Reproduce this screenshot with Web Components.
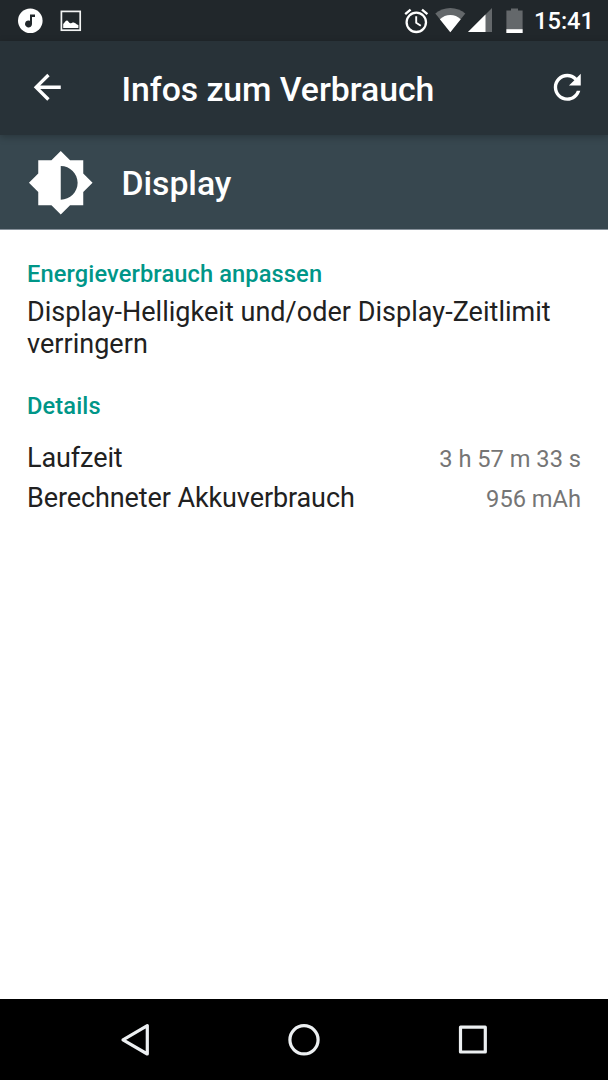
<!DOCTYPE html>
<html lang="de">
<head>
<meta charset="utf-8">
<title>Infos zum Verbrauch</title>
<style>
    html, body {
        margin: 0;
        height: 100%;
    }
    body {
        font-family: Roboto, sans-serif;
        background: #fff;
        overflow: hidden;
    }
</style>
</head>
<body>
<battery-screen>
    <status-bar slot="status" time="15:41"></status-bar>
    <tool-bar slot="toolbar">Infos zum Verbrauch</tool-bar>
    <entry-header slot="header">Display</entry-header>
    <info-section heading="Energieverbrauch anpassen">
        <info-summary>Display-Helligkeit und/oder Display-Zeitlimit verringern</info-summary>
    </info-section>
    <info-section heading="Details" spaced>
        <detail-row value="3 h 57 m 33 s">Laufzeit</detail-row>
        <detail-row value="956 mAh">Berechneter Akkuverbrauch</detail-row>
    </info-section>
    <nav-bar slot="nav"></nav-bar>
</battery-screen>

<script>
class BaseElement extends HTMLElement {
    constructor() {
        super();
        this._shadowRoot = this.attachShadow({ mode: 'open' })
        this._shadowRoot.innerHTML = this.template()
    }
}

class BatteryScreen extends BaseElement {
    template() {
        return `
            <style>
                :host {
                    display: grid;
                    grid-template-rows: 41px 94px 95px 1fr 81px;
                    height: 100vh;
                }
                main {
                    padding: 28px 27px 0;
                }
            </style>
            <slot name="status"></slot>
            <slot name="toolbar"></slot>
            <slot name="header"></slot>
            <main><slot></slot></main>
            <slot name="nav"></slot>
        `
    }
}

class StatusBar extends BaseElement {
    template() {
        return `
            <style>
                :host {
                    display: flex;
                    align-items: center;
                    box-sizing: border-box;
                    padding: 0 14px 0 17px;
                    background: #21272b;
                    color: #fff;
                }
                svg {
                    flex: none;
                    display: block;
                }
                .image { margin-left: 16px; }
                .alarm { margin-left: auto; }
                .wifi { margin-left: 6px; }
                .signal { margin-left: 2px; }
                .battery { margin-left: 13.5px; }
                .time {
                    margin-left: 11.5px;
                    padding-top: 1px;
                    font-size: 23.65px;
                    font-weight: 500;
                    line-height: 28px;
                }
            </style>
            <svg class="music" width="27" height="26" viewBox="0 0 27 26">
                <circle cx="13.3" cy="12.8" r="12.3" fill="#fff"/>
                <path d="M13 6.4h5v2.600h-3v7a3.500 3.500 0 1 1-2-3.200z" fill="#21272b"/>
            </svg>
            <svg class="image" width="22" height="22" viewBox="0 0 22 22">
                <rect x="1.4" y="1.4" width="18.8" height="18.8" fill="none" stroke="#f2f3f3" stroke-width="1.7"/>
                <path d="M3.2 18v-4c1.400-1 2-3 3.600-3.400 1.200-.2 1.800 1.800 2.800 2.400 1.200.600 2.600-.800 4.200-.600 1.400.200 2.400 1.800 4.600 2.600v3z" fill="#fff"/>
            </svg>
            <svg class="alarm" width="25" height="26" viewBox="0 0 25 26">
                <circle cx="12.3" cy="14.3" r="9.7" fill="none" stroke="#fff" stroke-width="2.3"/>
                <path d="M12.2 8.2v6.5l4.6 3" fill="none" stroke="#fff" stroke-width="1.9"/>
                <path d="M1.2 6.2l5.4-4.5M23.4 6.2L18 1.7" stroke="#fff" stroke-width="2.4"/>
            </svg>
            <svg class="wifi" width="31" height="25" viewBox="0 0 31 25">
                <path d="M15.3 24.2L.3 5.6C4.2 2.2 9.5 0 15.3 0s11.1 2.2 15 5.6z" fill="#64686b"/>
                <path d="M15.3 24.2L4.9 11.2c2.9-2.5 6.5-4.1 10.4-4.1s7.5 1.6 10.4 4.1z" fill="#fff"/>
            </svg>
            <svg class="signal" width="24" height="25" viewBox="0 0 24 25">
                <path d="M0 24L24 0v24z" fill="#64686b"/>
                <path d="M0 24L17.5 6.5v17.5z" fill="#fff"/>
            </svg>
            <svg class="battery" width="17" height="26" viewBox="0 0 17 26">
                <path d="M5 .4h7v2h4.600v22.600H.4V2.400H5z" fill="#64686b"/>
                <path d="M.4 21.200h16.200v3.800H.4z" fill="#fff"/>
            </svg>
            <span class="time"></span>
        `
    }

    connectedCallback() {
        this._shadowRoot.querySelector('.time').textContent = this.getAttribute('time')
    }
}

class ToolBar extends BaseElement {
    template() {
        return `
            <style>
                :host {
                    display: flex;
                    align-items: center;
                    box-sizing: border-box;
                    padding: 0 20.5px 0 26.5px;
                    background: #283238;
                    color: #fff;
                    box-shadow: 0 2px 7px rgba(0, 0, 0, .25);
                    z-index: 1;
                }
                svg {
                    flex: none;
                    fill: currentColor;
                    margin-bottom: 1px;
                }
                h1 {
                    flex: 1;
                    margin: 0 0 0 54.5px;
                    padding-top: 3px;
                    font-size: 33.8px;
                    font-weight: 500;
                    line-height: 40px;
                    letter-spacing: -.06px;
                    white-space: nowrap;
                }
            </style>
            <svg width="40.5" height="40.5" viewBox="0 0 24 24">
                <path d="M20 11H7.83l5.59-5.59L12 4l-8 8 8 8 1.41-1.41L7.83 13H20v-2z"/>
            </svg>
            <h1><slot></slot></h1>
            <svg width="40.5" height="40.5" viewBox="0 0 24 24">
                <path d="M17.65 6.35C16.2 4.9 14.21 4 12 4c-4.42 0-7.99 3.58-7.99 8s3.57 8 7.99 8c3.73 0 6.84-2.55 7.73-6h-2.08c-.82 2.33-3.04 4-5.65 4-3.31 0-6-2.69-6-6s2.69-6 6-6c1.66 0 3.14.69 4.22 1.78L13 11h7V4l-2.35 2.35z"/>
            </svg>
        `
    }
}

class EntryHeader extends BaseElement {
    template() {
        return `
            <style>
                :host {
                    display: flex;
                    align-items: center;
                    box-sizing: border-box;
                    padding: 0 27px;
                    background: #37474f;
                    border-bottom: 1px solid #87919a;
                    color: #fff;
                }
                svg {
                    flex: none;
                    fill: currentColor;
                    margin-top: 1px;
                }
                h2 {
                    margin: 0 0 0 27px;
                    padding-top: 3px;
                    font-size: 33.8px;
                    font-weight: 500;
                    line-height: 40px;
                    letter-spacing: -.06px;
                }
            </style>
            <svg width="67.5" height="67.5" viewBox="0 0 24 24">
                <path d="M20 15.31L23.31 12 20 8.69V4h-4.69L12 .69 8.69 4H4v4.69L.69 12 4 15.31V20h4.69L12 23.31 15.31 20H20v-4.69zM12 18V6c3.31 0 6 2.69 6 6s-2.69 6-6 6z"/>
            </svg>
            <h2><slot></slot></h2>
        `
    }
}

class InfoSection extends BaseElement {
    template() {
        return `
            <style>
                :host {
                    display: block;
                }
                :host([spaced]) {
                    margin-top: 30px;
                }
                h3 {
                    margin: 0;
                    padding-bottom: 6px;
                    color: #009688;
                    font-size: 23.65px;
                    font-weight: 500;
                    line-height: 32px;
                    letter-spacing: .11px;
                }
                :host([spaced]) h3 {
                    padding-bottom: 16px;
                }
            </style>
            <h3></h3>
            <slot></slot>
        `
    }

    connectedCallback() {
        this._shadowRoot.querySelector('h3').textContent = this.getAttribute('heading')
    }
}

class InfoSummary extends BaseElement {
    template() {
        return `
            <style>
                :host {
                    display: block;
                    color: #212121;
                    font-size: 27px;
                    line-height: 32px;
                    letter-spacing: .03px;
                }
            </style>
            <slot></slot>
        `
    }
}

class DetailRow extends BaseElement {
    template() {
        return `
            <style>
                :host {
                    display: flex;
                    justify-content: space-between;
                    align-items: baseline;
                    height: 40px;
                    color: #212121;
                    font-size: 27px;
                    line-height: 40px;
                }
                .label {
                    letter-spacing: -.1px;
                }
                .value {
                    color: #757575;
                    font-size: 23.65px;
                }
            </style>
            <span class="label"><slot></slot></span>
            <span class="value"></span>
        `
    }

    connectedCallback() {
        this._shadowRoot.querySelector('.value').textContent = this.getAttribute('value')
    }
}

class NavBar extends BaseElement {
    template() {
        return `
            <style>
                :host {
                    display: flex;
                    justify-content: center;
                    align-items: center;
                    gap: 132.5px;
                    background: #000;
                }
                svg {
                    flex: none;
                    fill: none;
                    stroke: #eceff1;
                    stroke-width: 3.2;
                    stroke-linejoin: round;
                }
            </style>
            <svg width="36" height="36" viewBox="0 0 36 36">
                <path d="M5 17.8L29.3 3.6v28.4z"/>
            </svg>
            <svg width="36" height="36" viewBox="0 0 36 36">
                <circle cx="18" cy="17.8" r="14.1"/>
            </svg>
            <svg width="36" height="36" viewBox="0 0 36 36">
                <rect x="5.5" y="5.2" width="24.8" height="24.8"/>
            </svg>
        `
    }
}

customElements.define('battery-screen', BatteryScreen);
customElements.define('status-bar', StatusBar);
customElements.define('tool-bar', ToolBar);
customElements.define('entry-header', EntryHeader);
customElements.define('info-section', InfoSection);
customElements.define('info-summary', InfoSummary);
customElements.define('detail-row', DetailRow);
customElements.define('nav-bar', NavBar);
</script>
</body>
</html>
